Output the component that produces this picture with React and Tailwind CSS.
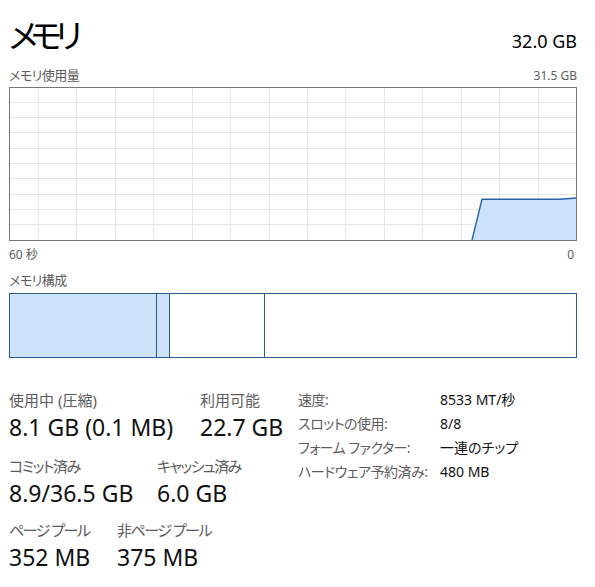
import React from 'react';

const UsageGraph = () => {
    // page box is x 9..577, y 87..241
    const verticals = Array.from({ length: 14 }, (_, k) => 29.3 + 38.46 * k);
    const horizontals = Array.from({ length: 9 }, (_, j) => 15.3 * (j + 1));

    return (
        <svg width="568" height="154" viewBox="0 0 568 154" className="block">
            <g stroke="#e6e6e6" strokeWidth="1" shapeRendering="crispEdges">
                {verticals.map((x, i) => (
                    <line key={`v${i}`} x1={x} y1="0" x2={x} y2="154" />
                ))}
                {horizontals.map((y, i) => (
                    <line key={`h${i}`} x1="0" y1={y} x2="568" y2={y} />
                ))}
            </g>
            <polygon points="463,153 473,112.3 551,112.3 568,111 568,153" fill="#cce3fb" />
            <polyline points="463,153 473,112.3 551,112.3 568,111" fill="none" stroke="#2a62a8" strokeWidth="1.4" />
            <rect x="0.5" y="0.5" width="567" height="153" fill="none" stroke="#777777" strokeWidth="1" shapeRendering="crispEdges" />
        </svg>
    );
};

const Stat = ({ label, value, width, tight }) => (
    <div className={`flex flex-col ${width}`}>
        <span className={`text-[15px] leading-[20px] text-[#5c5c5c] whitespace-nowrap ${tight ? 'tracking-[-1.5px]' : ''}`}>{label}</span>
        <span className="text-[23px] leading-[34px] text-[#111] whitespace-nowrap">{value}</span>
    </div>
);

const App = () => {
    const rows = [
        { gap: "", first: "w-[191px]", items: [{ label: "使用中 (圧縮)", value: "8.1 GB (0.1 MB)" }, { label: "利用可能", value: "22.7 GB" }] },
        { gap: "mt-[12px]", first: "w-[148px]", items: [{ label: "コミット済み", value: "8.9/36.5 GB", tight: true }, { label: "キャッシュ済み", value: "6.0 GB", tight: true }] },
        { gap: "mt-[10px]", first: "w-[108px]", items: [{ label: "ページ プール", value: "352 MB", tight: true }, { label: "非ページ プール", value: "375 MB", tight: true }] }
    ];

    const details = [
        ["速度:", "8533 MT/秒"],
        ["スロットの使用:", "8/8"],
        ["フォーム ファクター:", "一連のチップ"],
        ["ハードウェア予約済み:", "480 MB"]
    ];

    return (
        <div className="w-[595px] h-[587px] bg-white overflow-hidden pl-[9px] pr-[18px] font-['Noto_Sans','Noto_Sans_CJK_JP',sans-serif] [font-feature-settings:'palt']">
            {/* header */}
            <div className="flex justify-between items-baseline pt-[14px]">
                <h1 className="text-[33px] leading-[44px] text-black tracking-[-7px]">メモリ</h1>
                <span className="text-[18px] text-black">32.0 GB</span>
            </div>

            <div className="flex justify-between items-center h-[20px] mt-[8px]">
                <span className="text-[13px] text-[#5c5c5c] tracking-[-0.5px]">メモリ使用量</span>
                <span className="text-[12px] text-[#5c5c5c]">31.5 GB</span>
            </div>

            <div className="mt-[1px]">
                <UsageGraph />
            </div>

            <div className="flex justify-between items-center h-[20px] mt-[4px]">
                <span className="text-[12px] text-[#5c5c5c]">60 秒</span>
                <span className="text-[12px] text-[#5c5c5c] pr-[3px]">0</span>
            </div>

            <div className="flex items-center h-[20px] mt-[6px]">
                <span className="text-[13px] text-[#5c5c5c] tracking-[-0.5px]">メモリ構成</span>
            </div>

            {/* memory composition bar */}
            <div className="mt-[2px] h-[65px] flex border border-[#2b5a8c]">
                <div className="w-[147px] bg-[#cce3fb] border-r border-[#2b5a8c]"></div>
                <div className="w-[13px] bg-[#cce3fb] border-r border-[#2b5a8c]"></div>
                <div className="w-[95px] bg-white border-r border-[#2b5a8c]"></div>
                <div className="flex-1 bg-white"></div>
            </div>

            {/* stats */}
            <div className="flex mt-[32px]">
                <div className="w-[289px] flex flex-col">
                    {rows.map((row, i) => (
                        <div key={i} className={`flex ${row.gap}`}>
                            <Stat {...row.items[0]} width={row.first} />
                            <Stat {...row.items[1]} />
                        </div>
                    ))}
                </div>
                <div className="grid grid-cols-[142px_auto] auto-rows-[24px] items-center -mt-[3px] text-[14px]">
                    {details.map(([k, v]) => (
                        <React.Fragment key={k}>
                            <span className="text-[#5c5c5c] whitespace-nowrap tracking-[-0.5px]">{k}</span>
                            <span className="text-[#111] whitespace-nowrap">{v}</span>
                        </React.Fragment>
                    ))}
                </div>
            </div>
        </div>
    );
};

export default App;
